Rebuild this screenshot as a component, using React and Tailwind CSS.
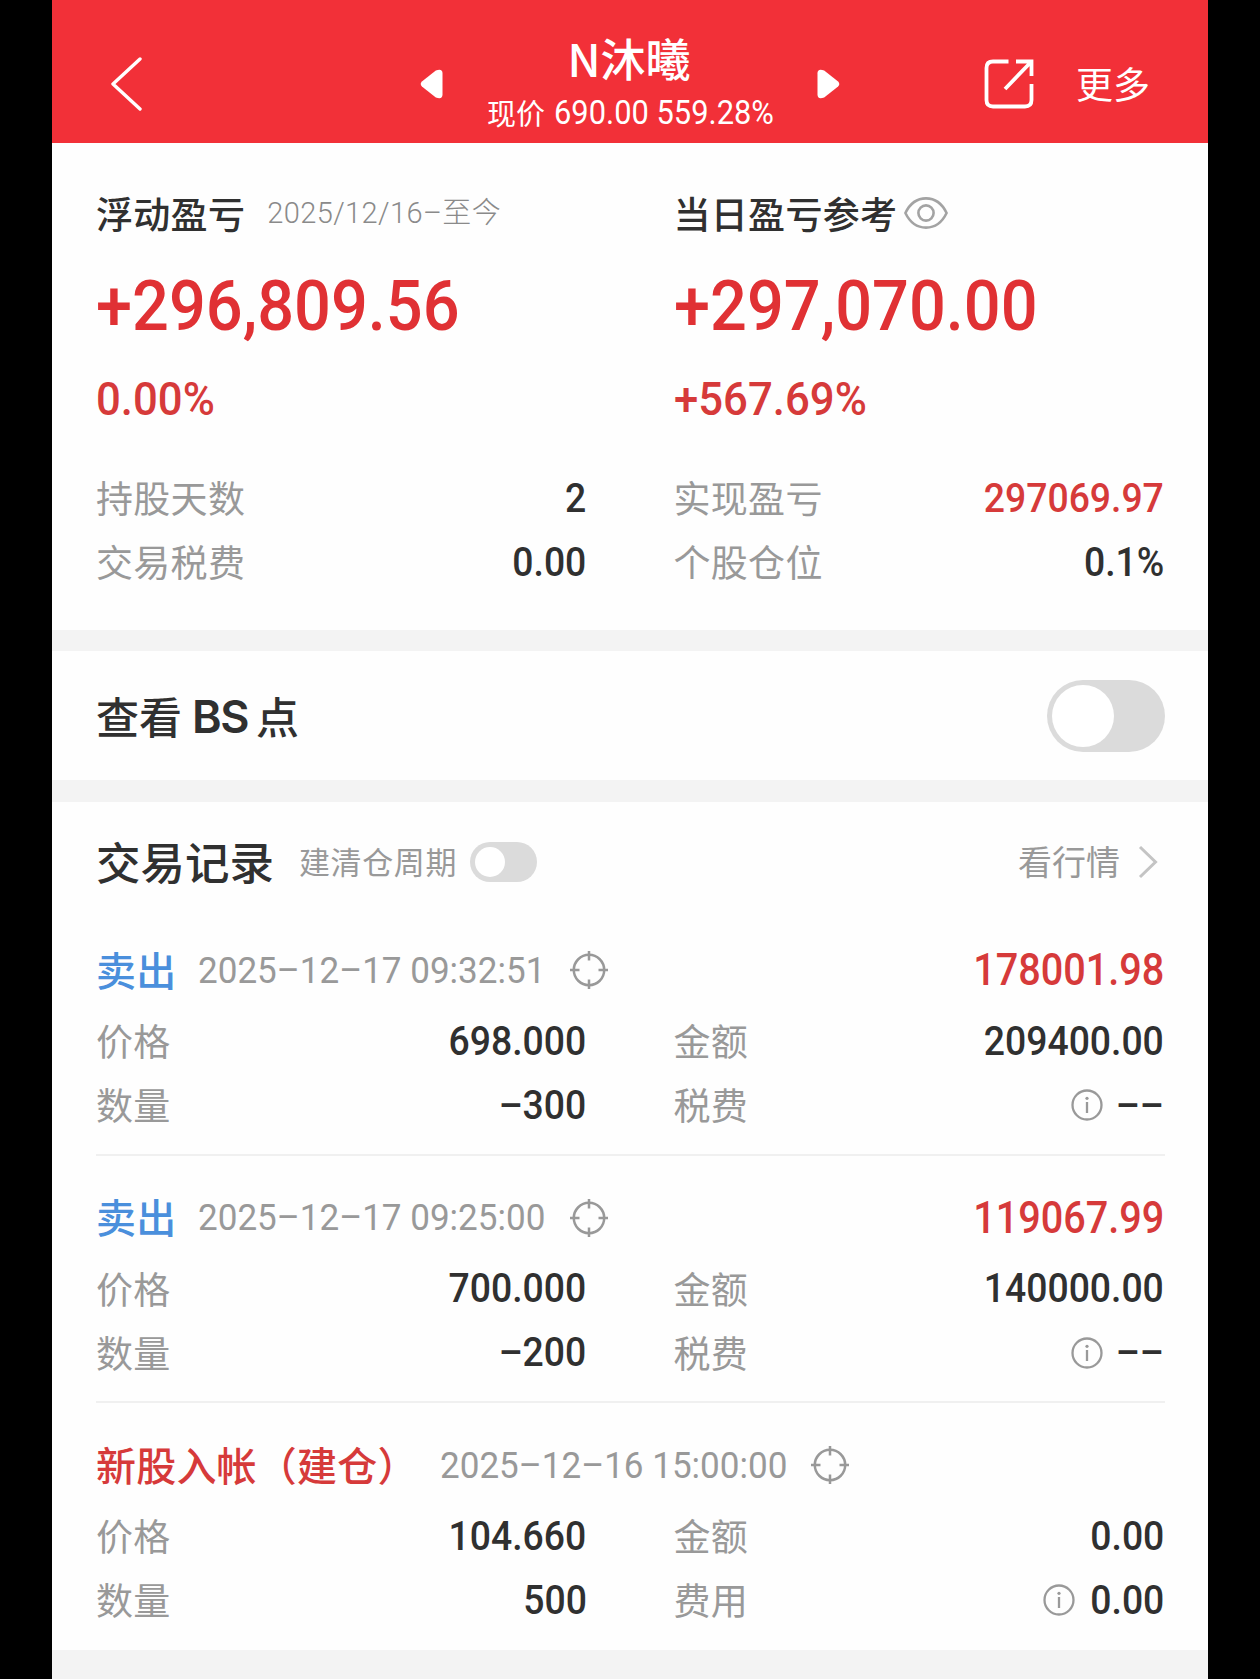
import { useState } from 'react';

const registros = [
  {
    id: 1,
    tipo: '卖出',
    cor: 'text-[#4a8fdc]',
    data: '2025–12–17 09:32:51',
    lucro: '178001.98',
    preco: '698.000',
    valor: '209400.00',
    quantidade: '–300',
    rotuloTaxa: '税费',
    taxa: '––',
  },
  {
    id: 2,
    tipo: '卖出',
    cor: 'text-[#4a8fdc]',
    data: '2025–12–17 09:25:00',
    lucro: '119067.99',
    preco: '700.000',
    valor: '140000.00',
    quantidade: '–200',
    rotuloTaxa: '税费',
    taxa: '––',
  },
  {
    id: 3,
    tipo: '新股入帐（建仓）',
    cor: 'text-[#d63a3a]',
    data: '2025–12–16 15:00:00',
    lucro: '',
    preco: '104.660',
    valor: '0.00',
    quantidade: '500',
    rotuloTaxa: '费用',
    taxa: '0.00',
  },
];

function Mira() {
  return (
    <svg width="38" height="38" viewBox="0 0 38 38" fill="none" stroke="#999" strokeWidth="2.5">
      <circle cx="19" cy="19" r="15.2" />
      <path d="M19 0v9.5M19 28.5V38M0 19h9.5M28.5 19H38" />
    </svg>
  );
}

function Info() {
  return (
    <svg width="32" height="32" viewBox="0 0 32 32" fill="none" stroke="#999" strokeWidth="2.3">
      <circle cx="16" cy="16" r="14.5" />
      <path d="M16 13v11" />
      <circle cx="16" cy="9.3" r="1.6" fill="#999" stroke="none" />
    </svg>
  );
}

function Olho() {
  return (
    <svg width="44" height="32" viewBox="0 0 44 32" fill="none" stroke="#a3a3a3" strokeWidth="2.6">
      <path d="M1.4 16C6 6.500 13.500 1.400 22 1.400S38 6.500 42.600 16C38 25.500 30.500 30.600 22 30.600S6 25.500 1.400 16Z" strokeLinejoin="round" />
      <circle cx="22" cy="16" r="7.6" />
    </svg>
  );
}

function Linha({ rotulo, valor, cor = 'text-[#303030]', info = false }) {
  return (
    <div className="flex h-16 items-center justify-between">
      <span className="pb-px text-[37px] leading-none tracking-[0.3px] text-[#999]">{rotulo}</span>
      <div className="flex items-center gap-[8px]">
        {info && <Info />}
        <span className={`-mr-px origin-right scale-x-[0.91] font-['Roboto'] text-[41px] font-medium leading-none ${cor}`}>
          {valor}
        </span>
      </div>
    </div>
  );
}

function Registro({ registro }) {
  return (
    <div className="-mr-[2px] h-[247.5px] border-b-2 border-[#f0f0f0] pr-[2px] pt-8 last:border-b-0">
      <div className="flex h-[60px] items-center">
        <span className={`pb-[3px] text-[40px] font-medium leading-none tracking-[0.2px] ${registro.cor}`}>{registro.tipo}</span>
        <span className="ml-[22px] mr-[5px] origin-left scale-x-[0.947] font-['Roboto'] text-[37px] leading-none text-[#999]">
          {registro.data}
        </span>
        <Mira />
        <span className="-mr-px ml-auto origin-right scale-x-[0.9] font-['Roboto'] text-[44px] font-medium leading-none text-[#d63a3a]">
          {registro.lucro}
        </span>
      </div>
      <div className="mt-[9px] grid grid-cols-2 gap-x-[88px]">
        <Linha rotulo="价格" valor={registro.preco} />
        <Linha rotulo="金额" valor={registro.valor} />
        <Linha rotulo="数量" valor={registro.quantidade} />
        <Linha rotulo={registro.rotuloTaxa} valor={registro.taxa} info />
      </div>
    </div>
  );
}

function Resultado({ total, percentual }) {
  return (
    <>
      <div className="flex h-[124px] origin-left scale-x-[0.927] items-center font-['Roboto'] text-[70px] font-medium leading-none text-[#e03134]">
        {total}
      </div>
      <div className="flex h-[61px] origin-left scale-x-[0.93] items-center font-['Roboto'] text-[47px] font-medium leading-none text-[#d63a3a]">
        {percentual}
      </div>
    </>
  );
}

function App() {
  const [verPontos, setVerPontos] = useState(false);
  const [ciclo, setCiclo] = useState(false);

  return (
    <div className="flex h-[1679px] justify-center overflow-hidden bg-black font-['Noto_Sans_CJK_SC',sans-serif]">
      <div className="flex w-[1156px] flex-col bg-[#f3f3f3]">
        <header className="flex h-[143px] shrink-0 items-center bg-[#f23038] pl-[58px] pr-[58px] pt-6 text-white">
          <svg width="32" height="56" viewBox="0 0 32 56" fill="none" stroke="white" strokeWidth="3.4">
            <path d="M30 3L3 28L30 53" strokeLinecap="round" strokeLinejoin="round" />
          </svg>
          <svg className="ml-[278px]" width="23" height="32" viewBox="0 0 24 32" fill="white">
            <path d="M2 13.500L16.500 2Q23.500-.5 23.500 5V27Q23.500 32.500 16.500 30L2 18.500Q-.5 16 2 13.500Z" />
          </svg>
          <div className="-mt-6 flex w-[374px] flex-col items-center pt-[27px]">
            <h1 className="-ml-[2px] text-[45px] font-medium leading-[56px]">N沐曦</h1>
            <p className="flex items-center text-[29px] leading-[54px]">
              <span className="-mt-[2px]">现价</span>
              <span className="ml-[9px] -mr-[16px] origin-left scale-x-[0.935] font-['Roboto'] text-[33px]">690.00 559.28%</span>
            </p>
          </div>
          <svg width="23" height="32" viewBox="0 0 24 32" fill="white">
            <path d="M22 13.500L7.500 2Q.5-.5.5 5V27Q.5 32.500 7.500 30L22 18.500Q24.500 16 22 13.500Z" />
          </svg>
          <svg className="ml-auto" width="50" height="50" viewBox="0 0 50 50" fill="none" stroke="white" strokeWidth="3.8">
            <path d="M24.500 2.500H9Q2.500 2.500 2.500 9V41Q2.500 47.500 9 47.500H41Q47.500 47.500 47.500 41V25" />
            <path d="M32 2.500H47.500V17M47 3L21 30" />
          </svg>
          <span className="ml-[42px] text-[37px] leading-none">更多</span>
        </header>

        <section className="h-[487px] shrink-0 bg-[#fefefe] pl-11 pr-[45px] pt-[39px]">
          <div className="grid grid-cols-2 gap-x-[88px]">
            <div>
              <div className="flex h-[62px] items-center">
                <h2 className="text-[37px] font-medium leading-none tracking-[0.3px] text-[#303030]">浮动盈亏</h2>
                <span className="ml-[22px] font-['Roboto','Noto_Sans_CJK_SC'] text-[29px] font-light leading-none tracking-[0.4px] text-[#8a8a8a]">
                  2025/12/16–至今
                </span>
              </div>
              <Resultado total="+296,809.56" percentual="0.00%" />
            </div>
            <div>
              <div className="flex h-[62px] items-center">
                <h2 className="text-[37px] font-medium leading-none tracking-[0.3px] text-[#303030]">当日盈亏参考</h2>
                <span className="ml-[7px]"><Olho /></span>
              </div>
              <Resultado total="+297,070.00" percentual="+567.69%" />
            </div>
          </div>
          <div className="mt-[37px] grid grid-cols-2 gap-x-[88px]">
            <Linha rotulo="持股天数" valor="2" />
            <Linha rotulo="实现盈亏" valor="297069.97" cor="text-[#d63a3a]" />
            <Linha rotulo="交易税费" valor="0.00" />
            <Linha rotulo="个股仓位" valor="0.1%" />
          </div>
        </section>

        <section className="mt-[21px] flex h-[129px] shrink-0 items-center justify-between bg-[#fefefe] pl-11 pr-[43px]">
          <h2 className="flex items-center text-[43px] font-medium leading-none text-[#303030]">
            <span>查看</span>
            <span className="ml-[10px] mr-[8px] pt-[2px] font-['Inter'] text-[45px] font-semibold tracking-[-1.5px]">BS</span>
            <span>点</span>
          </h2>
          <button
            onClick={() => setVerPontos(!verPontos)}
            className={`flex h-[72px] w-[118px] items-center rounded-full bg-[#dbdbdb] px-[5px] ${verPontos ? 'justify-end' : ''}`}
          >
            <span className="size-[62px] rounded-full bg-white" />
          </button>
        </section>

        <section className="mt-[22px] h-[848px] shrink-0 bg-[#fefefe] pl-11 pr-[45px]">
          <div className="flex h-[106px] items-center pt-[13px]">
            <h2 className="text-[44.5px] font-medium leading-none text-[#303030]">交易记录</h2>
            <span className="ml-[25px] pb-[2px] text-[31px] leading-none tracking-[0.6px] text-[#999]">建清仓周期</span>
            <button
              onClick={() => setCiclo(!ciclo)}
              className={`ml-[13px] flex h-[40px] w-[67px] items-center rounded-full bg-[#dbdbdb] px-[5px] ${ciclo ? 'justify-end' : ''}`}
            >
              <span className="size-[30px] rounded-full bg-white" />
            </button>
            <span className="ml-auto pb-[2px] text-[34px] leading-none text-[#999]">看行情</span>
            <svg className="ml-[18px] mr-[5px]" width="20" height="34" viewBox="0 0 20 34" fill="none" stroke="#c4c4c4" strokeWidth="3">
              <path d="M2 2L17.500 17L2 32" />
            </svg>
          </div>
          {registros.map((registro) => (
            <Registro key={registro.id} registro={registro} />
          ))}
        </section>
      </div>
    </div>
  );
}

export default App;
